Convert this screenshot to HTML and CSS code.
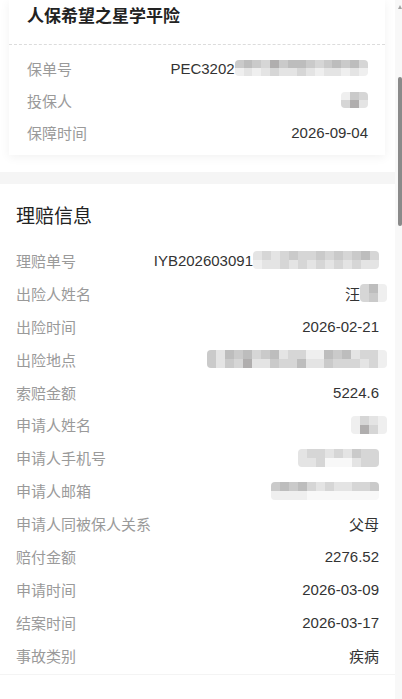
FILE: index.html
```html
<!DOCTYPE html>
<html lang="zh-CN">
<head>
<meta charset="utf-8">
<title>理赔信息</title>
<link rel="stylesheet" href="styles.css">
</head>
<body>
<div class="screen">
  <div class="page">
    <div class="top">
      <div class="card">
        <div class="card-title">人保希望之星学平险</div>
        <div class="card-body">
          <div class="row"><span class="label">保单号</span><span class="value">PEC3202<span class="mosaic sm"><i class="c"></i><i class="f"></i><i class="d"></i><i class="a"></i><i class="c"></i><i class="f"></i><i class="b"></i><i class="a"></i><i class="e"></i><i class="b"></i><i class="c"></i><i class="a"></i><i class="d"></i><i class="a"></i><i class="d"></i><i class="b"></i><i class="c"></i><i class="a"></i><i class="b"></i><i class="f"></i><i class="c"></i><i class="a"></i><i class="d"></i><i class="a"></i><i class="c"></i><i class="f"></i><i class="d"></i><i class="a"></i><i class="b"></i><i class="f"></i></span></span></div>
          <div class="row"><span class="label">投保人</span><span class="value"><span class="mosaic sm"><i class="f"></i><i class="b"></i><i class="c"></i><i class="e"></i><i class="b"></i><i class="a"></i></span></span></div>
          <div class="row"><span class="label">保障时间</span><span class="value">2026-09-04</span></div>
        </div>
      </div>
    </div>
    <div class="band"></div>
    <div class="section">
      <div class="section-title">理赔信息</div>
      <div class="row"><span class="label">理赔单号</span><span class="value">IYB202603091<span class="mosaic"><i class="a"></i><i class="f"></i><i class="b"></i><i class="a"></i><i class="a"></i><i class="a"></i><i class="b"></i><i class="b"></i><i class="c"></i><i class="a"></i><i class="b"></i><i class="b"></i><i class="b"></i><i class="a"></i><i class="c"></i><i class="b"></i><i class="b"></i><i class="a"></i><i class="c"></i><i class="b"></i><i class="b"></i><i class="a"></i><i class="c"></i><i class="b"></i><i class="d"></i><i class="a"></i><i class="b"></i><i class="a"></i></span></span></div>
      <div class="row"><span class="label">出险人姓名</span><span class="value">汪<span class="mosaic over"><i class="b"></i><i class="b"></i><i class="d"></i><i class="c"></i><i class="f"></i><i class="f"></i></span></span></div>
      <div class="row"><span class="label">出险时间</span><span class="value">2026-02-21</span></div>
      <div class="row"><span class="label">出险地点</span><span class="value"><span class="mosaic over"><i class="c"></i><i class="c"></i><i class="a"></i><i class="a"></i><i class="d"></i><i class="c"></i><i class="c"></i><i class="b"></i><i class="d"></i><i class="e"></i><i class="b"></i><i class="a"></i><i class="c"></i><i class="a"></i><i class="d"></i><i class="c"></i><i class="a"></i><i class="b"></i><i class="b"></i><i class="b"></i><i class="b"></i><i class="d"></i><i class="f"></i><i class="a"></i><i class="f"></i><i class="a"></i><i class="d"></i><i class="c"></i><i class="c"></i><i class="b"></i><i class="d"></i><i class="b"></i><i class="a"></i><i class="b"></i><i class="b"></i><i class="a"></i><i class="b"></i><i class="b"></i><i class="f"></i><i class="f"></i></span></span></div>
      <div class="row"><span class="label">索赔金额</span><span class="value">5224.6</span></div>
      <div class="row"><span class="label">申请人姓名</span><span class="value"><span class="mosaic over"><i class="f"></i><i class="f"></i><i class="b"></i><i class="e"></i><i class="a"></i><i class="b"></i><i class="f"></i><i class="f"></i></span></span></div>
      <div class="row"><span class="label">申请人手机号</span><span class="value"><span class="mosaic"><i class="a"></i><i class="a"></i><i class="b"></i><i class="a"></i><i class="b"></i><i class="b"></i><i class="a"></i><i class="w"></i><i class="b"></i><i class="w"></i><i class="a"></i><i class="w"></i><i class="c"></i><i class="a"></i><i class="b"></i><i class="b"></i><i class="b"></i><i class="b"></i></span></span></div>
      <div class="row"><span class="label">申请人邮箱</span><span class="value"><span class="mosaic"><i class="c"></i><i class="f"></i><i class="d"></i><i class="f"></i><i class="c"></i><i class="f"></i><i class="d"></i><i class="f"></i><i class="b"></i><i class="w"></i><i class="a"></i><i class="w"></i><i class="b"></i><i class="w"></i><i class="a"></i><i class="w"></i><i class="a"></i><i class="w"></i><i class="b"></i><i class="w"></i><i class="b"></i><i class="w"></i><i class="c"></i><i class="w"></i></span></span></div>
      <div class="row"><span class="label">申请人同被保人关系</span><span class="value">父母</span></div>
      <div class="row"><span class="label">赔付金额</span><span class="value">2276.52</span></div>
      <div class="row"><span class="label">申请时间</span><span class="value">2026-03-09</span></div>
      <div class="row"><span class="label">结案时间</span><span class="value">2026-03-17</span></div>
      <div class="row"><span class="label">事故类别</span><span class="value">疾病</span></div>
    </div>
  </div>
  <div class="scrollbar">
    <div class="arrow"></div>
    <div class="thumb"></div>
  </div>
</div>
</body>
</html>
```

FILE: styles.css
```css
* { box-sizing: border-box; }
html, body { margin: 0; padding: 0; background: #fff; }
body {
  font-family: "Liberation Sans", "Noto Sans CJK SC", sans-serif;
  color: #333;
}
.screen {
  display: flex;
  height: 699px;
  overflow: hidden;
}
.page {
  flex: 1;
  min-width: 0;
  display: flex;
  flex-direction: column;
}
.top {
  padding: 0 10px 17px 9px;
}
.card {
  background: #fff;
  box-shadow: 0 2px 10px rgba(0, 0, 0, 0.06);
}
.card-title {
  padding: 5px 18px 15px;
  font-size: 17px;
  line-height: 24px;
  font-weight: bold;
  color: #222;
  border-bottom: 1px dashed #dcdcdc;
}
.card-body {
  padding: 7px 17px 7px 18px;
}
.card-body .row { height: 32px; }
.band {
  height: 12px;
  background: #f5f5f5;
}
.section {
  padding: 21px 16px 2px;
  border-bottom: 1px solid #f4f4f4;
}
.section-title {
  font-size: 19px;
  line-height: 24px;
  color: #222;
  margin-bottom: 15px;
}
.row {
  height: 32.9px;
  display: flex;
  align-items: center;
  justify-content: space-between;
  font-size: 15px;
}
.label { color: #9a9a9a; white-space: nowrap; }
.value {
  color: #333;
  display: flex;
  align-items: center;
  white-space: nowrap;
}
.mosaic {
  display: inline-grid;
  grid-auto-flow: column;
  grid-template-rows: repeat(2, 9px);
  grid-auto-columns: 9px;
  border-radius: 4px;
  overflow: hidden;
  filter: blur(0.5px);
}
.mosaic.sm {
  grid-template-rows: repeat(2, 8px);
  grid-auto-columns: 8.9px;
}
.mosaic.over { margin-right: -8px; }
.mosaic i { display: block; }
.mosaic .a { background: #e4e4e4; }
.mosaic .b { background: #d6d6d6; }
.mosaic .c { background: #cacaca; }
.mosaic .d { background: #bdbdbd; }
.mosaic .e { background: #b0aeae; }
.mosaic .f { background: #efefef; }
.mosaic .w { background: #f8f8f8; }
.scrollbar {
  width: 7px;
  background: #f8f8f8;
  display: flex;
  flex-direction: column;
  align-items: flex-end;
}
.arrow {
  margin-top: 5px;
  width: 0;
  height: 0;
  border-left: 2px solid transparent;
  border-right: 2px solid transparent;
  border-bottom: 4px solid #a3a3a3;
}
.thumb {
  margin-top: 68px;
  width: 4px;
  height: 149px;
  background: #8a8a8a;
  border-radius: 2px;
}
```
